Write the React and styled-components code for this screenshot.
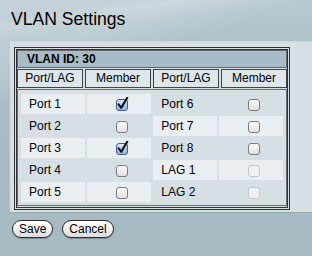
import { useState } from "react";
import styled, { createGlobalStyle } from "styled-components";

const GlobalStyle = createGlobalStyle`
  html, body {
    margin: 0;
    padding: 0;
  }
  body {
    width: 312px;
    height: 256px;
    overflow: hidden;
    font-family: "Liberation Sans", Arial, sans-serif;
    background:
      linear-gradient(160deg, rgba(255,255,255,0.18) 0 18%, rgba(255,255,255,0) 30%),
      linear-gradient(172deg, rgba(255,255,255,0) 0 6%, rgba(255,255,255,0.12) 9%, rgba(255,255,255,0) 14%),
      linear-gradient(#b8c9d1 0, #abbec7 60px, #a7bac4 256px);
  }
`;

const Page = styled.div`
  display: flex;
  flex-direction: column;
  align-items: flex-start;
`;

const Title = styled.h1`
  margin: 9px 0 0 11px;
  font-size: 17.6px;
  line-height: 20px;
  font-weight: normal;
  color: #000;
`;

const Panel = styled.div`
  margin: 12px 0 0 10px;
  width: 302px;
  padding: 5px 0 2px 4px;
  box-sizing: border-box;
  background: #d6dfe3;
  border-top: 1px solid #c9d6dc;
  border-bottom: 1px solid #97a9b2;
`;

const Frame = styled.div`
  width: 276px;
  box-sizing: border-box;
  border: 3px double #333;
  padding: 0 0 1px;
  display: flex;
  flex-direction: column;
  gap: 1px;
`;

const IdBar = styled.div`
  height: 18px;
  box-sizing: border-box;
  border: 1px solid #666;
  background: #a7bbc8;
  padding-left: 9px;
  font-size: 12px;
  font-weight: bold;
  line-height: 16px;
`;

const HeadRow = styled.div`
  display: grid;
  grid-template-columns: repeat(4, 1fr);
  gap: 2px;
`;

const HeadCell = styled.div`
  height: 19px;
  box-sizing: border-box;
  border: 1px solid #444;
  background: #dde6eb;
  font-size: 12px;
  line-height: 17px;
  text-align: center;
`;

const DataBox = styled.div`
  border: 1px solid #6f6f6f;
  padding: 4px 3px 3px;
  display: grid;
  grid-template-columns: repeat(4, 1fr);
  column-gap: 2.6px;
  row-gap: 2px;
`;

const Cell = styled.div`
  height: 20px;
  display: flex;
  align-items: center;
  background: ${(p) => (p.$shaded ? "#e8eef1" : "transparent")};
  font-size: 12px;
  padding-left: ${(p) => (p.$label ? "8px" : "6px")};
  justify-content: ${(p) => (p.$label ? "flex-start" : "center")};
`;

const BoxButton = styled.button`
  all: unset;
  display: block;
  width: 14px;
  height: 14px;
  line-height: 0;
  cursor: ${(p) => (p.disabled ? "default" : "pointer")};
`;

const Actions = styled.div`
  display: flex;
  gap: 9px;
  margin: 7px 0 0 12px;
`;

const Button = styled.button`
  height: 18px;
  box-sizing: border-box;
  border: 1px solid #2e2e2e;
  border-radius: 9px;
  background: linear-gradient(#ffffff, #f2f2f2 50%, #dcdcdc);
  box-shadow: 0 1px 1px rgba(0, 0, 0, 0.25);
  font-family: "Liberation Sans", Arial, sans-serif;
  font-size: 12px;
  line-height: 16px;
  padding: 0 6px;
  color: #000;
`;

const Check = ({ checked, disabled, onToggle }) => (
  <BoxButton disabled={disabled} onClick={onToggle}>
    <svg width="14" height="14" viewBox="0 0 14 14">
      <defs>
        <linearGradient id="cbOff" x1="0" y1="0" x2="0" y2="1">
          <stop offset="0" stopColor="#ffffff" />
          <stop offset="1" stopColor="#dedede" />
        </linearGradient>
        <linearGradient id="cbOn" x1="0" y1="0" x2="0" y2="1">
          <stop offset="0" stopColor="#dbe8f8" />
          <stop offset="1" stopColor="#8fb2e0" />
        </linearGradient>
      </defs>
      <rect
        x="1.5"
        y="2.5"
        width="11"
        height="11"
        rx="2.5"
        fill={disabled ? "#eef1f3" : checked ? "url(#cbOn)" : "url(#cbOff)"}
        stroke={disabled ? "#c2c8cc" : checked ? "#3f5f90" : "#7d7d7d"}
      />
      {checked && (
        <path
          d="M3.6 7.4 L6.3 10.8 L12.2 0.8"
          fill="none"
          stroke="#111"
          strokeWidth="2.1"
          strokeLinecap="round"
          strokeLinejoin="round"
        />
      )}
    </svg>
  </BoxButton>
);

const ports = [
  { name: "Port 1", member: true },
  { name: "Port 2", member: false },
  { name: "Port 3", member: true },
  { name: "Port 4", member: false },
  { name: "Port 5", member: false },
  { name: "Port 6", member: false },
  { name: "Port 7", member: false },
  { name: "Port 8", member: false },
  { name: "LAG 1", member: false, disabled: true },
  { name: "LAG 2", member: false, disabled: true },
];

export default function App() {
  const [items, setItems] = useState(ports);

  const toggle = (i) =>
    setItems(items.map((it, j) => (j === i ? { ...it, member: !it.member } : it)));

  const renderItem = (i) => {
    const it = items[i];
    const shaded = i % 2 === 0;
    return [
      <Cell key={`l${i}`} $label $shaded={shaded}>
        {it.name}
      </Cell>,
      <Cell key={`c${i}`} $shaded={shaded}>
        <Check checked={it.member} disabled={it.disabled} onToggle={() => toggle(i)} />
      </Cell>,
    ];
  };

  return (
    <>
      <GlobalStyle />
      <Page>
        <Title>VLAN Settings</Title>
        <Panel>
          <Frame>
            <IdBar>VLAN ID: 30</IdBar>
            <HeadRow>
              <HeadCell>Port/LAG</HeadCell>
              <HeadCell>Member</HeadCell>
              <HeadCell>Port/LAG</HeadCell>
              <HeadCell>Member</HeadCell>
            </HeadRow>
            <DataBox>
              {[0, 1, 2, 3, 4].map((r) => [...renderItem(r), ...renderItem(r + 5)])}
            </DataBox>
          </Frame>
        </Panel>
        <Actions>
          <Button>Save</Button>
          <Button>Cancel</Button>
        </Actions>
      </Page>
    </>
  );
}
